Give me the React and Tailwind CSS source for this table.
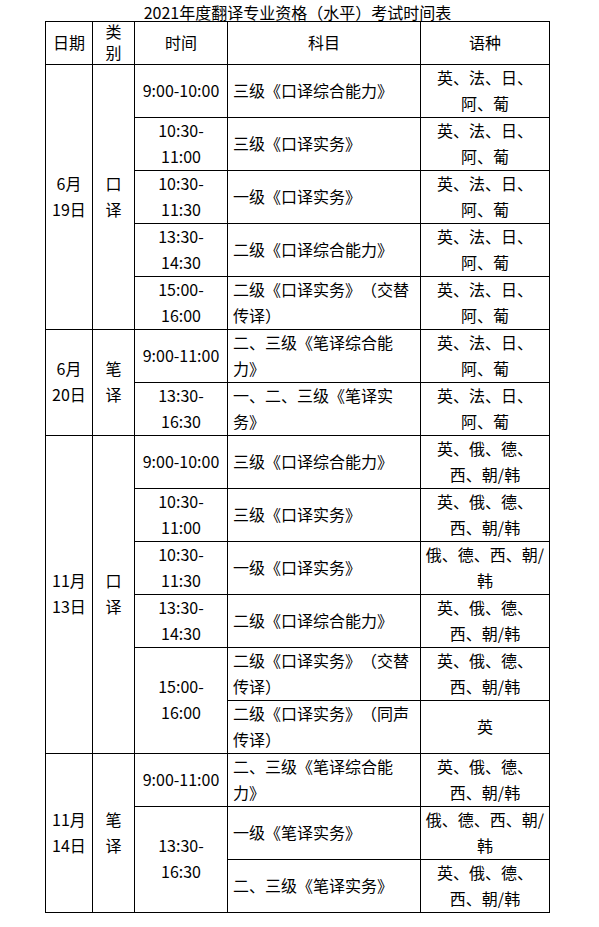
import React from "react";

const L1 = ["英、法、日、", "阿、葡"];
const L2 = ["英、俄、德、", "西、朝/韩"];
const L3 = ["俄、德、西、朝/", "韩"];

const groups = [
  {
    date: ["6月", "19日"],
    cat: ["口", "译"],
    span: "row-span-5",
    rows: [
      { time: ["9:00-10:00"], subj: ["三级《口译综合能力》"], lang: L1 },
      { time: ["10:30-", "11:00"], subj: ["三级《口译实务》"], lang: L1 },
      { time: ["10:30-", "11:30"], subj: ["一级《口译实务》"], lang: L1 },
      { time: ["13:30-", "14:30"], subj: ["二级《口译综合能力》"], lang: L1 },
      { time: ["15:00-", "16:00"], subj: ["二级《口译实务》（交替", "传译）"], lang: L1 },
    ],
  },
  {
    date: ["6月", "20日"],
    cat: ["笔", "译"],
    span: "row-span-2",
    rows: [
      { time: ["9:00-11:00"], subj: ["二、三级《笔译综合能", "力》"], lang: L1 },
      { time: ["13:30-", "16:30"], subj: ["一、二、三级《笔译实", "务》"], lang: L1 },
    ],
  },
  {
    date: ["11月", "13日"],
    cat: ["口", "译"],
    span: "row-span-6",
    rows: [
      { time: ["9:00-10:00"], subj: ["三级《口译综合能力》"], lang: L2 },
      { time: ["10:30-", "11:00"], subj: ["三级《口译实务》"], lang: L2 },
      { time: ["10:30-", "11:30"], subj: ["一级《口译实务》"], lang: L3 },
      { time: ["13:30-", "14:30"], subj: ["二级《口译综合能力》"], lang: L2 },
      {
        time: ["15:00-", "16:00"],
        timeSpan: "row-span-2",
        subs: [
          { subj: ["二级《口译实务》（交替", "传译）"], lang: L2 },
          { subj: ["二级《口译实务》（同声", "传译）"], lang: ["英"] },
        ],
      },
    ],
  },
  {
    date: ["11月", "14日"],
    cat: ["笔", "译"],
    span: "row-span-3",
    rows: [
      { time: ["9:00-11:00"], subj: ["二、三级《笔译综合能", "力》"], lang: L2 },
      {
        time: ["13:30-", "16:30"],
        timeSpan: "row-span-2",
        subs: [
          { subj: ["一级《笔译实务》"], lang: L3 },
          { subj: ["二、三级《笔译实务》"], lang: L2 },
        ],
      },
    ],
  },
];

function Lines({ lines }) {
  return lines.map((l, i) => (
    <div key={i} className="whitespace-nowrap">
      {l}
    </div>
  ));
}

function Cell({ lines, className = "pb-[3px]", align = "center" }) {
  return (
    <div
      className={`border-r border-b border-black flex flex-col justify-center ${
        align === "left" ? "items-start pl-[5px]" : "items-center text-center"
      } ${className}`}
    >
      <Lines lines={lines} />
    </div>
  );
}

export default function App() {
  const cells = [];
  groups.forEach((g, gi) => {
    g.rows.forEach((r, ri) => {
      if (ri === 0) {
        cells.push(<Cell key={`d${gi}`} lines={g.date} className={`${g.span} pb-[3px]`} />);
        cells.push(<Cell key={`c${gi}`} lines={g.cat} className={`${g.span} pb-[3px]`} />);
      }
      if (r.subs) {
        r.subs.forEach((s, si) => {
          if (si === 0) {
            cells.push(
              <Cell key={`t${gi}-${ri}`} lines={r.time} className={`${r.timeSpan} pb-[3px]`} />
            );
          }
          cells.push(
            <Cell key={`s${gi}-${ri}-${si}`} lines={s.subj} align="left" />
          );
          cells.push(<Cell key={`l${gi}-${ri}-${si}`} lines={s.lang} />);
        });
      } else {
        cells.push(<Cell key={`t${gi}-${ri}`} lines={r.time} />);
        cells.push(<Cell key={`s${gi}-${ri}`} lines={r.subj} align="left" />);
        cells.push(<Cell key={`l${gi}-${ri}`} lines={r.lang} />);
      }
    });
  });

  return (
    <div className="w-[599px] h-[927px] bg-white text-black font-['Noto_Sans_CJK_SC',sans-serif] text-[16px] [text-spacing-trim:space-all]">
      <div className="ml-[45px] w-[505px]">
        <div className="h-[21px] pt-[3px] leading-[18px] text-center whitespace-nowrap">
          2021年度翻译专业资格（水平）考试时间表
        </div>
        <div className="grid grid-cols-[47px_42px_93px_193px_129px] grid-rows-[43px_repeat(16,53px)] border-l border-t border-black leading-[26px]">
          <Cell lines={["日期"]} className="leading-[21px] pb-[2px]" />
          <Cell lines={["类", "别"]} className="leading-[21px] pb-[2px]" />
          <Cell lines={["时间"]} className="leading-[21px] pb-[2px]" />
          <Cell lines={["科目"]} className="leading-[21px] pb-[2px]" />
          <Cell lines={["语种"]} className="leading-[21px] pb-[2px]" />
          {cells}
        </div>
      </div>
    </div>
  );
}
